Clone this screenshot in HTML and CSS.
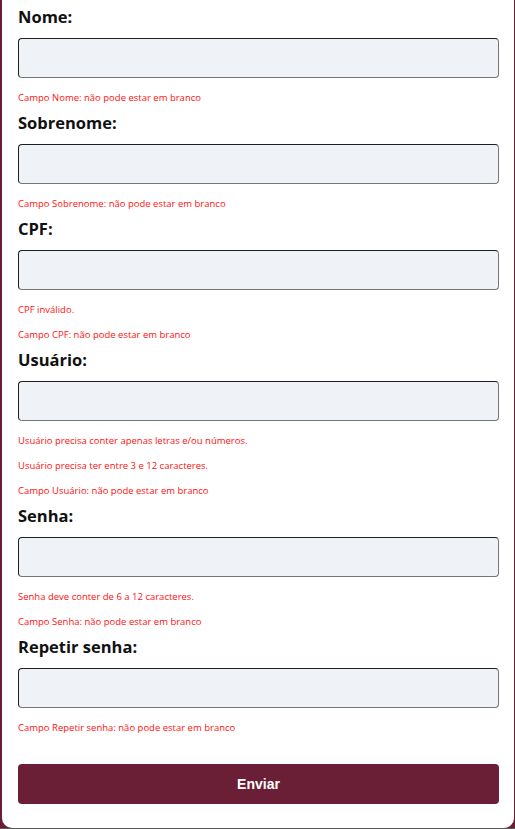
FILE: index.html
```html
<!DOCTYPE html>
<html lang="pt-BR">
<head>
<meta charset="utf-8">
<title>Cadastro</title>
<link rel="stylesheet" href="styles.css">
</head>
<body>
<div class="page">
  <form class="card">
    <div class="field">
      <label class="label">Nome:</label>
      <input class="input" type="text">
      <p class="error">Campo Nome: não pode estar em branco</p>
    </div>
    <div class="field">
      <label class="label">Sobrenome:</label>
      <input class="input" type="text">
      <p class="error">Campo Sobrenome: não pode estar em branco</p>
    </div>
    <div class="field">
      <label class="label">CPF:</label>
      <input class="input" type="text">
      <p class="error">CPF inválido.</p>
      <p class="error">Campo CPF: não pode estar em branco</p>
    </div>
    <div class="field">
      <label class="label">Usuário:</label>
      <input class="input" type="text">
      <p class="error">Usuário precisa conter apenas letras e/ou números.</p>
      <p class="error">Usuário precisa ter entre 3 e 12 caracteres.</p>
      <p class="error">Campo Usuário: não pode estar em branco</p>
    </div>
    <div class="field">
      <label class="label">Senha:</label>
      <input class="input" type="password">
      <p class="error">Senha deve conter de 6 a 12 caracteres.</p>
      <p class="error">Campo Senha: não pode estar em branco</p>
    </div>
    <div class="field">
      <label class="label">Repetir senha:</label>
      <input class="input" type="password">
      <p class="error">Campo Repetir senha: não pode estar em branco</p>
    </div>
    <button class="submit" type="button">Enviar</button>
  </form>
</div>
</body>
</html>
```

FILE: styles.css
```css
html, body {
  margin: 0;
  padding: 0;
}
body {
  background: #6b1f37;
  font-family: "Open Sans", "Noto Sans", sans-serif;
  height: 829px;
  overflow: hidden;
}
.page {
  height: 828px;
  border-bottom: 1px solid #5a5a5a;
  padding: 0 1px 0 2px;
}
.card {
  background: #ffffff;
  height: 828px;
  box-sizing: border-box;
  border-radius: 0 0 10px 10px;
  padding: 5px 15px 0 16px;
  display: flex;
  flex-direction: column;
}
.field {
  display: flex;
  flex-direction: column;
  margin-bottom: 7px;
}
.label {
  display: block;
  font-size: 16.5px;
  font-weight: 700;
  line-height: 24px;
  color: #111111;
}
.input {
  margin: 9px 0 0 0;
  height: 40px;
  box-sizing: border-box;
  border: 1px solid;
  border-color: #1e1e1e #767676 #767676 #1e1e1e;
  border-radius: 4px;
  background: #eff3f7;
  padding: 0 8px;
  font-family: inherit;
  font-size: 14px;
}
.error {
  margin: 13px 0 0 0;
  font-size: 9.5px;
  line-height: 12px;
  color: #ff1010;
}
.input + .error {
  margin-top: 14px;
}
.submit {
  margin-top: 23px;
  height: 40px;
  border: none;
  border-radius: 4px;
  background: #6a1f36;
  color: #ffffff;
  font-family: "Liberation Sans", Arial, sans-serif;
  font-weight: 700;
  font-size: 14px;
  cursor: pointer;
}
```
